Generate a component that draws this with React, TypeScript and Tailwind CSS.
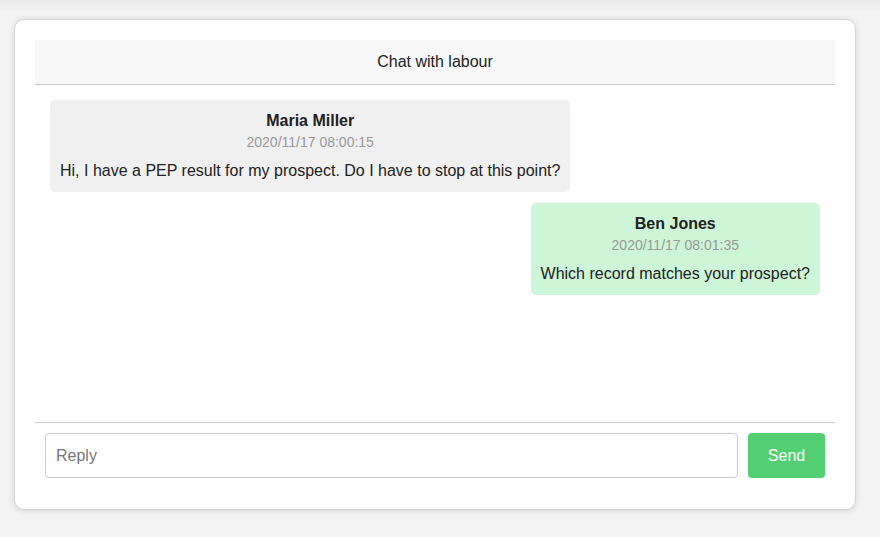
const messages = [
  {
    id: 1,
    name: "Maria Miller",
    time: "2020/11/17 08:00:15",
    text: "Hi, I have a PEP result for my prospect. Do I have to stop at this point?",
    mine: false,
  },
  {
    id: 2,
    name: "Ben Jones",
    time: "2020/11/17 08:01:35",
    text: "Which record matches your prospect?",
    mine: true,
  },
];

export default function App() {
  return (
    <main
      className="relative w-full h-[537px] bg-[#f3f3f3] overflow-hidden"
      style={{ fontFamily: '"Liberation Sans", Arial, sans-serif' }}
    >
      <div className="absolute top-0 left-0 right-0 h-3 bg-gradient-to-b from-[#e9e9e9] to-[#f3f3f3]" />
      <div className="relative pt-[19px] pl-[14px]">
        <div className="w-[842px] bg-white border border-[#d4d4d4] rounded-[10px] shadow-[0_1px_6px_rgba(0,0,0,0.12)] px-5 pt-5 pb-[21px]">
          <div className="h-[45px] bg-[#f8f8f8] border-b border-[#cccccc] flex items-center justify-center text-base text-[#222]">
            Chat with labour
          </div>
          <div className="h-[337px] p-[15px] flex flex-col gap-[11px]">
            {messages.map((m) => (
              <div key={m.id} className={m.mine ? "flex justify-end" : "flex justify-start"}>
                <div
                  className={
                    (m.mine ? "bg-[#cdf5d7]" : "bg-[#f0f0f0]") +
                    " rounded-[5px] px-[10px] pt-[10px] pb-[10px] text-center"
                  }
                >
                  <div className="font-bold text-base leading-[22px] text-[#222]">{m.name}</div>
                  <div className="text-sm leading-[20px] text-[#999]">{m.time}</div>
                  <div className="mt-[8px] text-base leading-[22px] text-[#222]">{m.text}</div>
                </div>
              </div>
            ))}
          </div>
          <div className="border-t border-[#cccccc] p-[10px] flex gap-[10px]">
            <input
              placeholder="Reply"
              className="flex-1 h-[45px] border border-[#cccccc] rounded-[4px] px-[10px] text-base text-[#222] placeholder:text-[#777] outline-none"
            />
            <button className="w-[77px] h-[45px] bg-[#53ce73] text-white text-base rounded-[4px]">
              Send
            </button>
          </div>
        </div>
      </div>
    </main>
  );
}
